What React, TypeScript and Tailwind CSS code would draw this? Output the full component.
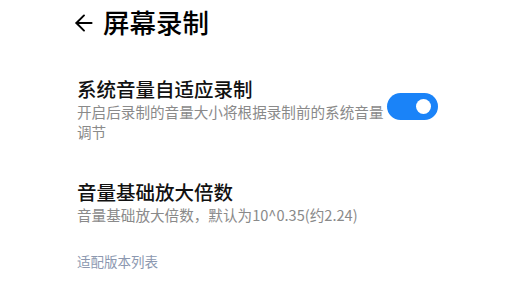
import { ArrowLeft } from 'lucide-react'

const font = { fontFamily: '"Noto Sans CJK SC", "Noto Sans", sans-serif' }

export default function App() {
  return (
    <div className="w-[517px] h-[282px] bg-white overflow-hidden" style={font}>
      {/* Header */}
      <div className="flex items-center pl-[71px] pt-[5px] h-[40px]">
        <ArrowLeft size={26} strokeWidth={1.8} className="text-black" />
        <span className="ml-[6px] text-[26.5px] font-medium text-black leading-none">屏幕录制</span>
      </div>

      {/* Setting 1 */}
      <div className="flex items-center pl-[77px] pr-[79px] mt-[36px]">
        <div className="flex-1">
          <div className="text-[19.5px] font-medium text-[#111] leading-[25px]">系统音量自适应录制</div>
          <div className="text-[14.6px] text-[#8a8a8a] leading-[20px] mt-[1px] w-[310px]">
            开启后录制的音量大小将根据录制前的系统音量调节
          </div>
        </div>
        <div className="w-[51px] h-[27px] rounded-full bg-[#1a83f8] flex items-center justify-end pr-[7px] mt-[-6px]">
          <div className="w-[15px] h-[15px] rounded-full bg-white" />
        </div>
      </div>

      {/* Setting 2 */}
      <div className="pl-[77px] mt-[37px]">
        <div className="text-[19.5px] font-medium text-[#111] leading-[25px]">音量基础放大倍数</div>
        <div className="text-[14.6px] text-[#8a8a8a] leading-[20px] mt-[1px]">音量基础放大倍数，默认为10^0.35(约2.24)</div>
      </div>

      {/* Footer link */}
      <div className="pl-[77px] mt-[27px] text-[13.5px] text-[#8c98b0] leading-[18px]">适配版本列表</div>
    </div>
  )
}
